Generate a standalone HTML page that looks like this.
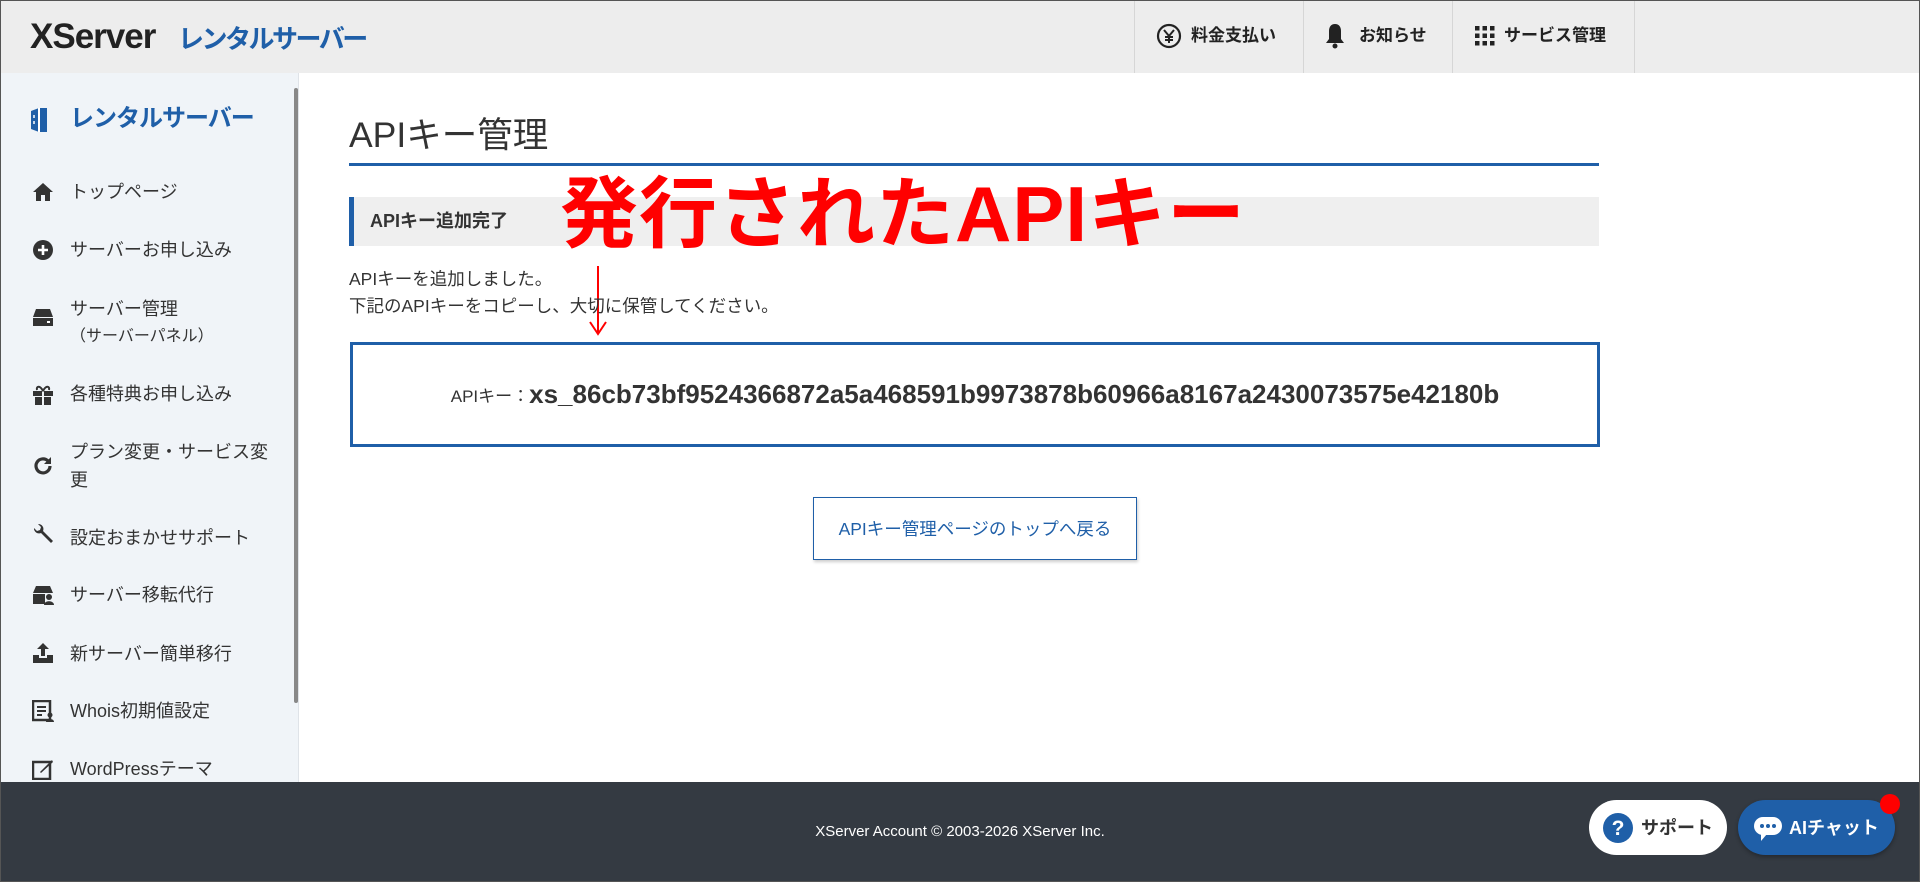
<!DOCTYPE html>
<html><head><meta charset="utf-8"><style>
*{margin:0;padding:0;box-sizing:border-box}
body{width:1920px;height:882px;overflow:hidden;background:#fff;font-family:"Liberation Sans","Noto Sans CJK JP",sans-serif;color:#333;position:relative}
.a{position:absolute;white-space:nowrap}
#frame{position:absolute;left:0;top:0;width:1920px;height:882px;border:1px solid #555;z-index:50;pointer-events:none}
#hdr{position:absolute;left:0;top:0;width:1920px;height:73px;background:#ededed}
.div{position:absolute;top:0;width:1px;height:73px;background:#d6d6d6}
.nav{position:absolute;top:24px;font-size:17px;font-weight:bold;color:#222;line-height:24px}
#side{position:absolute;left:0;top:73px;width:299px;height:709px;background:#f0f4f8;border-right:1px solid #dfe3e8}
.mi{position:absolute;left:70px;font-size:18px;color:#333;line-height:28px}
.ic{position:absolute;left:32px;width:22px;height:22px}
#foot{position:absolute;left:0;top:782px;width:1920px;height:100px;background:#343a42}
</style></head><body>
<div id="hdr">
 <div class="a" style="left:30px;top:17px;font-size:35px;font-weight:bold;color:#222;letter-spacing:-1px;line-height:40px">XServer</div>
 <div class="a" style="left:178px;top:22px;font-size:26px;font-weight:bold;color:#1f5fa8;letter-spacing:-2.5px;line-height:34px">レンタルサーバー</div>
 <div class="div" style="left:1134px"></div><div class="div" style="left:1303px"></div><div class="div" style="left:1452px"></div><div class="div" style="left:1634px"></div>
 <svg class="a" style="left:1156px;top:23px" width="26" height="26" viewBox="0 0 26 26"><circle cx="13" cy="13" r="11" fill="none" stroke="#222" stroke-width="2.2"/><path d="M8 7l5 6 5-6M13 13v7M9 14h8M9 17h8" stroke="#222" stroke-width="2" fill="none"/></svg>
 <div class="nav" style="left:1191px">料金支払い</div>
 <svg class="a" style="left:1325px;top:22px" width="20" height="28" viewBox="0 0 20 28"><path d="M10 2c-4 0-6 3-6 7v8l-3 4h18l-3-4V9c0-4-2-7-6-7z" fill="#222"/><circle cx="10" cy="24" r="2.5" fill="#222"/></svg>
 <div class="nav" style="left:1359px">お知らせ</div>
 <svg class="a" style="left:1475px;top:26px" width="20" height="20" viewBox="0 0 20 20" fill="#222"><rect x="0" y="0" width="4.5" height="4.5"/><rect x="7.5" y="0" width="4.5" height="4.5"/><rect x="15" y="0" width="4.5" height="4.5"/><rect x="0" y="7.5" width="4.5" height="4.5"/><rect x="7.5" y="7.5" width="4.5" height="4.5"/><rect x="15" y="7.5" width="4.5" height="4.5"/><rect x="0" y="15" width="4.5" height="4.5"/><rect x="7.5" y="15" width="4.5" height="4.5"/><rect x="15" y="15" width="4.5" height="4.5"/></svg>
 <div class="nav" style="left:1504px">サービス管理</div>
</div>
<div id="side">
 <div class="a" style="left:294px;top:15px;width:4px;height:615px;background:#888;border-radius:2px"></div>
 <svg class="a" style="left:29px;top:34px" width="20" height="26" viewBox="0 0 20 26"><path d="M2 4l8-3h8v24h-8l-8-3z" fill="#1f5fa8"/><path d="M10 1v24" stroke="#fff" stroke-width="2"/><path d="M5 8v3M5 14v3" stroke="#fff" stroke-width="1.5"/></svg>
 <div class="a" style="left:70px;top:30px;font-size:24px;font-weight:bold;color:#1f5fa8;letter-spacing:-1px;line-height:32px">レンタルサーバー</div>
 <svg class="ic" style="top:108px" viewBox="0 0 22 22"><path d="M11 2L1 11h3v9h5v-6h4v6h5v-9h3z" fill="#333"/></svg>
 <div class="mi" style="top:105px">トップページ</div>
 <svg class="ic" style="top:166px" viewBox="0 0 22 22"><circle cx="11" cy="11" r="10" fill="#333"/><path d="M11 6v10M6 11h10" stroke="#fff" stroke-width="2.6"/></svg>
 <div class="mi" style="top:163px">サーバーお申し込み</div>
 <svg class="ic" style="top:233px" viewBox="0 0 22 22"><path d="M4 3h14l3 8H1z" fill="#333"/><rect x="1" y="12" width="20" height="8" fill="#333"/><rect x="15" y="15" width="3" height="2" fill="#fff"/></svg>
 <div class="mi" style="top:222px">サーバー管理</div>
 <div class="mi" style="top:250px;font-size:16px">（サーバーパネル）</div>
 <svg class="ic" style="top:311px" viewBox="0 0 22 22"><rect x="1" y="7" width="20" height="5" fill="#333"/><rect x="3" y="13" width="16" height="8" fill="#333"/><path d="M11 7v14" stroke="#f0f4f8" stroke-width="2"/><path d="M11 7C8 1 4 2 5 6M11 7c3-6 7-5 6-1" stroke="#333" stroke-width="2" fill="none"/></svg>
 <div class="mi" style="top:307px">各種特典お申し込み</div>
 <svg class="ic" style="top:382px" viewBox="0 0 22 22"><path d="M18 11a7 7 0 1 1-2-5" stroke="#333" stroke-width="3.2" fill="none"/><path d="M19 2v7h-7z" fill="#333"/></svg>
 <div class="mi" style="top:365px">プラン変更・サービス変</div>
 <div class="mi" style="top:393px">更</div>
 <svg class="ic" style="top:450px" viewBox="0 0 22 22"><path d="M2 5a5 5 0 0 0 7 5l10 10 2-2L11 8a5 5 0 0 0-5-7l3 3-1 3-3 1z" fill="#333"/></svg>
 <div class="mi" style="top:451px">設定おまかせサポート</div>
 <svg class="ic" style="top:511px" viewBox="0 0 22 22"><path d="M4 2h14l3 7H1z" fill="#333"/><rect x="1" y="10" width="12" height="10" fill="#333"/><circle cx="17" cy="13" r="3" fill="#333"/><path d="M12 21c0-5 10-5 10 0z" fill="#333"/></svg>
 <div class="mi" style="top:508px">サーバー移転代行</div>
 <svg class="ic" style="top:569px" viewBox="0 0 22 22"><path d="M11 1l6 6h-4v7H9V7H5z" fill="#333"/><path d="M1 13h6v3h8v-3h6v8H1z" fill="#333"/></svg>
 <div class="mi" style="top:567px">新サーバー簡単移行</div>
 <svg class="ic" style="top:627px" viewBox="0 0 22 22"><rect x="1" y="1" width="17" height="19" fill="none" stroke="#333" stroke-width="2.5"/><path d="M5 7h9M5 11h9M5 15h5" stroke="#333" stroke-width="2"/><circle cx="18" cy="15" r="2.5" fill="#333"/><path d="M14 22c0-4 8-4 8 0z" fill="#333"/></svg>
 <div class="mi" style="top:624px">Whois初期値設定</div>
 <svg class="ic" style="top:685px" viewBox="0 0 22 22"><rect x="1" y="4" width="17" height="17" fill="none" stroke="#333" stroke-width="2.5"/><path d="M8 14l12-12 1 2-12 11z" fill="#333"/></svg>
 <div class="mi" style="top:682px">WordPressテーマ</div>
</div>

<div class="a" style="left:349px;top:113px;font-size:35.5px;color:#333;line-height:44px">APIキー管理</div>
<div class="a" style="left:349px;top:163px;width:1250px;height:3px;background:#1f5fa8"></div>
<div class="a" style="left:349px;top:197px;width:1250px;height:49px;background:#efefef;border-left:5px solid #1f5fa8"></div>
<div class="a" style="left:370px;top:208px;font-size:18px;font-weight:bold;color:#333;line-height:26px">APIキー追加完了</div>
<div class="a" style="left:560px;top:168px;font-size:78px;font-weight:bold;color:#ff0000;line-height:92px;letter-spacing:1px">発行されたAPIキー</div>
<svg class="a" style="left:588px;top:266px" width="20" height="70" viewBox="0 0 20 70"><path d="M10 0v66" stroke="#ff0000" stroke-width="2"/><path d="M2 56l8 12 8-12" stroke="#ff0000" stroke-width="2" fill="none"/></svg>
<div class="a" style="left:349px;top:267px;font-size:17.5px;line-height:24px">APIキーを追加しました。</div>
<div class="a" style="left:349px;top:294px;font-size:17.5px;line-height:24px">下記のAPIキーをコピーし、大切に保管してください。</div>
<div class="a" style="left:350px;top:342px;width:1250px;height:105px;border:3px solid #1f5fa8;display:flex;align-items:center;justify-content:center">
 <span style="font-size:17px;color:#333">APIキー：</span><span style="font-size:26px;font-weight:bold;color:#333">xs_86cb73bf9524366872a5a468591b9973878b60966a8167a2430073575e42180b</span>
</div>
<div class="a" style="left:813px;top:497px;width:324px;height:63px;border:1px solid #1f5fa8;background:#fff;box-shadow:1px 2px 3px rgba(0,0,0,.2);font-size:17.5px;color:#1f5fa8;display:flex;align-items:center;justify-content:center">APIキー管理ページのトップへ戻る</div>

<div id="foot">
 <div class="a" style="left:0;width:1920px;top:40px;text-align:center;font-size:15px;color:#fff;line-height:20px">XServer Account © 2003-2026 XServer Inc.</div>
 <div class="a" style="left:1589px;top:18px;width:138px;height:55px;background:#fff;border-radius:28px"></div>
 <svg class="a" style="left:1603px;top:31px" width="30" height="30" viewBox="0 0 30 30"><circle cx="15" cy="15" r="15" fill="#1f5fa8"/><text x="15" y="22" text-anchor="middle" font-size="21" font-weight="bold" fill="#fff" font-family="Liberation Sans">?</text></svg>
 <div class="a" style="left:1641px;top:33px;font-size:18px;font-weight:bold;color:#333;line-height:26px">サポート</div>
 <div class="a" style="left:1738px;top:18px;width:157px;height:55px;background:#1f5fa8;border-radius:28px;box-shadow:0 2px 4px rgba(0,0,0,.3)"></div>
 <svg class="a" style="left:1753px;top:33px" width="30" height="28" viewBox="0 0 30 28"><rect x="1" y="2" width="28" height="18" rx="9" fill="#fff"/><path d="M8 18v8l6-7z" fill="#fff"/><circle cx="9" cy="11" r="2" fill="#1f5fa8"/><circle cx="15" cy="11" r="2" fill="#1f5fa8"/><circle cx="21" cy="11" r="2" fill="#1f5fa8"/></svg>
 <div class="a" style="left:1789px;top:33px;font-size:18px;font-weight:bold;color:#fff;line-height:26px">AIチャット</div>
 <div class="a" style="left:1880px;top:12px;width:20px;height:20px;background:#ff0000;border-radius:50%"></div>
</div>
<div id="frame"></div>
</body></html>
